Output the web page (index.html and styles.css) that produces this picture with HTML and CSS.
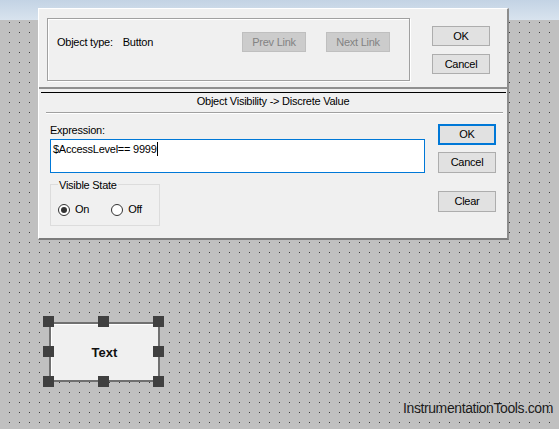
FILE: index.html
```html
<!DOCTYPE html>
<html>
<head>
<meta charset="utf-8">
<link rel="stylesheet" href="styles.css">
</head>
<body>
<div class="screen">
  <div class="band"></div>

  <div class="dialog">
    <div class="top">
      <div class="group">
        <span class="lbl">Object type:</span>
        <span class="val">Button</span>
        <div class="btn dis prev">Prev Link</div>
        <div class="btn dis next">Next Link</div>
      </div>
      <div class="btncol top-btns">
        <div class="btn">OK</div>
        <div class="btn">Cancel</div>
      </div>
    </div>

    <div class="lower">
      <div class="rule-black"></div>
      <div class="title">Object Visibility -&gt; Discrete Value</div>
      <div class="rule-etched"></div>
      <div class="body">
        <div class="left">
          <div class="label">Expression:</div>
          <div class="input">$AccessLevel== 9999<span class="caret"></span></div>
          <div class="grp">
            <span class="legend">Visible State</span>
            <div class="radios">
              <div class="radio on"><span class="circle"></span><span>On</span></div>
              <div class="radio off"><span class="circle"></span><span>Off</span></div>
            </div>
          </div>
        </div>
        <div class="btncol right">
          <div class="btn def">OK</div>
          <div class="btn">Cancel</div>
          <div class="btn clear">Clear</div>
        </div>
      </div>
    </div>
  </div>

  <div class="obj">
    <div class="obj-rect">Text</div>
    <span class="h h-tl"></span>
    <span class="h h-tc"></span>
    <span class="h h-tr"></span>
    <span class="h h-ml"></span>
    <span class="h h-mr"></span>
    <span class="h h-bl"></span>
    <span class="h h-bc"></span>
    <span class="h h-br"></span>
  </div>

  <div class="wm">InstrumentationTools.com</div>
</div>
</body>
</html>
```

FILE: styles.css
```css
html, body {
  margin: 0;
  padding: 0;
}

body {
  font-family: "Liberation Sans", Arial, sans-serif;
  font-size: 11px;
  letter-spacing: -0.25px;
  color: #000;
}

.screen {
  position: relative;
  width: 559px;
  height: 429px;
  overflow: hidden;
  background-color: #3c3c3c;
  background-image:
    linear-gradient(90deg, transparent 1px, #c0c0c0 1px),
    linear-gradient(transparent 1px, #c0c0c0 1px);
  background-size: 10px 10px;
  background-position: 9px 2px;
}

.band {
  height: 20px;
  background: linear-gradient(#c3d3e4, #d8e3ee);
}

/* ---------- dialog window ---------- */
.dialog {
  position: absolute;
  left: 38px;
  top: 8px;
  width: 471px;
  box-sizing: border-box;
  background: #f0f0f0;
  border-left: 1px solid #ffffff;
  border-top: 1px solid #ffffff;
  border-right: 2px solid #8c8c8c;
  border-bottom: 2px solid #7c7c7c;
}

.top {
  display: flex;
  align-items: flex-start;
  padding: 9px 0 0 8px;
  box-sizing: border-box;
  border-bottom: 2px solid #909090;
  height: 80px;
}

.group {
  width: 363px;
  height: 63px;
  box-sizing: border-box;
  border: 1px solid #a0a0a0;
  box-shadow: inset 1px 1px 0 #ffffff, 1px 1px 0 #ffffff;
  display: flex;
  align-items: center;
  padding: 0 0 15px 9px;
}

.lbl {
  line-height: 20px;
}

.val {
  margin-left: 10px;
  line-height: 20px;
}

.btn {
  width: 58px;
  height: 20px;
  box-sizing: border-box;
  border: 1px solid #adadad;
  background: #e1e1e1;
  display: flex;
  align-items: center;
  justify-content: center;
  line-height: 1;
}

.btn.dis {
  width: 64px;
  background: #cccccc;
  border-color: #bfbfbf;
  color: #838383;
}

.prev {
  margin-left: 89px;
}

.next {
  margin-left: 20px;
}

.btncol {
  display: flex;
  flex-direction: column;
}

.top-btns {
  margin: 8px 0 0 22px;
  gap: 8px;
}

/* ---------- lower part ---------- */
.lower {
  height: 149px;
  padding-top: 3px;
  box-sizing: border-box;
}

.rule-black {
  height: 1px;
  background: #000;
  margin: 0 1px 0 2px;
}

.title {
  height: 19px;
  line-height: 17px;
  text-align: center;
}

.rule-etched {
  height: 1px;
  width: 457px;
  margin-left: 7px;
  background: #a0a0a0;
  border-bottom: 1px solid #ffffff;
}

.body {
  display: flex;
  padding: 10px 0 0 11px;
}

.left {
  width: 375px;
}

.label {
  line-height: 13px;
}

.input {
  margin-top: 2px;
  height: 34px;
  box-sizing: border-box;
  border: 1px solid #0078d7;
  background: #ffffff;
  padding: 2px 0 0 2px;
  line-height: 14px;
  display: flex;
  align-items: flex-start;
}

.caret {
  display: inline-block;
  width: 1px;
  height: 14px;
  background: #000;
}

.grp {
  margin-top: 11px;
  width: 110px;
  height: 42px;
  box-sizing: border-box;
  border: 1px solid #dcdcdc;
  padding-left: 7px;
}

.legend {
  display: inline-block;
  margin-top: -6px;
  padding: 0 1px;
  background: #f0f0f0;
  line-height: 13px;
  vertical-align: top;
}

.radios {
  display: flex;
  align-items: center;
  margin-top: 6px;
  line-height: 13px;
}

.radio {
  display: flex;
  align-items: center;
  gap: 5px;
}

.radio.off {
  margin-left: 22px;
}

.circle {
  width: 12px;
  height: 12px;
  box-sizing: border-box;
  border: 1px solid #333333;
  border-radius: 50%;
  background: #ffffff;
  display: flex;
  align-items: center;
  justify-content: center;
}

.radio.on .circle::after {
  content: "";
  width: 6px;
  height: 6px;
  border-radius: 50%;
  background: #333333;
}

.right {
  margin-left: 13px;
}

.right .btn {
  height: 21px;
  margin-bottom: 7px;
}

.right .btn.def {
  border: 2px solid #0078d7;
}

.right .btn.clear {
  margin-top: 11px;
}

/* ---------- canvas object ---------- */
.obj {
  position: absolute;
  left: 43px;
  top: 316px;
  width: 122px;
  height: 72px;
}

.obj-rect {
  position: absolute;
  left: 6px;
  top: 6px;
  width: 111px;
  height: 60px;
  box-sizing: border-box;
  border: 2px solid #707070;
  background: #f0f0f0;
  box-shadow: inset 1px 1px 0 #ffffff;
  display: flex;
  align-items: center;
  justify-content: center;
  font-weight: bold;
  font-size: 13px;
  letter-spacing: 0;
  color: #111;
}

.h {
  position: absolute;
  width: 11px;
  height: 11px;
  background: #404040;
}

.h-tl { left: 0; top: 0; }
.h-tc { left: 55px; top: 0; }
.h-tr { left: 110px; top: 0; }
.h-ml { left: 0; top: 30px; }
.h-mr { left: 110px; top: 30px; }
.h-bl { left: 0; top: 60px; }
.h-bc { left: 55px; top: 60px; }
.h-br { left: 110px; top: 60px; }

.wm {
  position: absolute;
  left: 403px;
  top: 399px;
  font-size: 14px;
  line-height: 18px;
  letter-spacing: -0.4px;
  color: #1c1c1c;
}
```
